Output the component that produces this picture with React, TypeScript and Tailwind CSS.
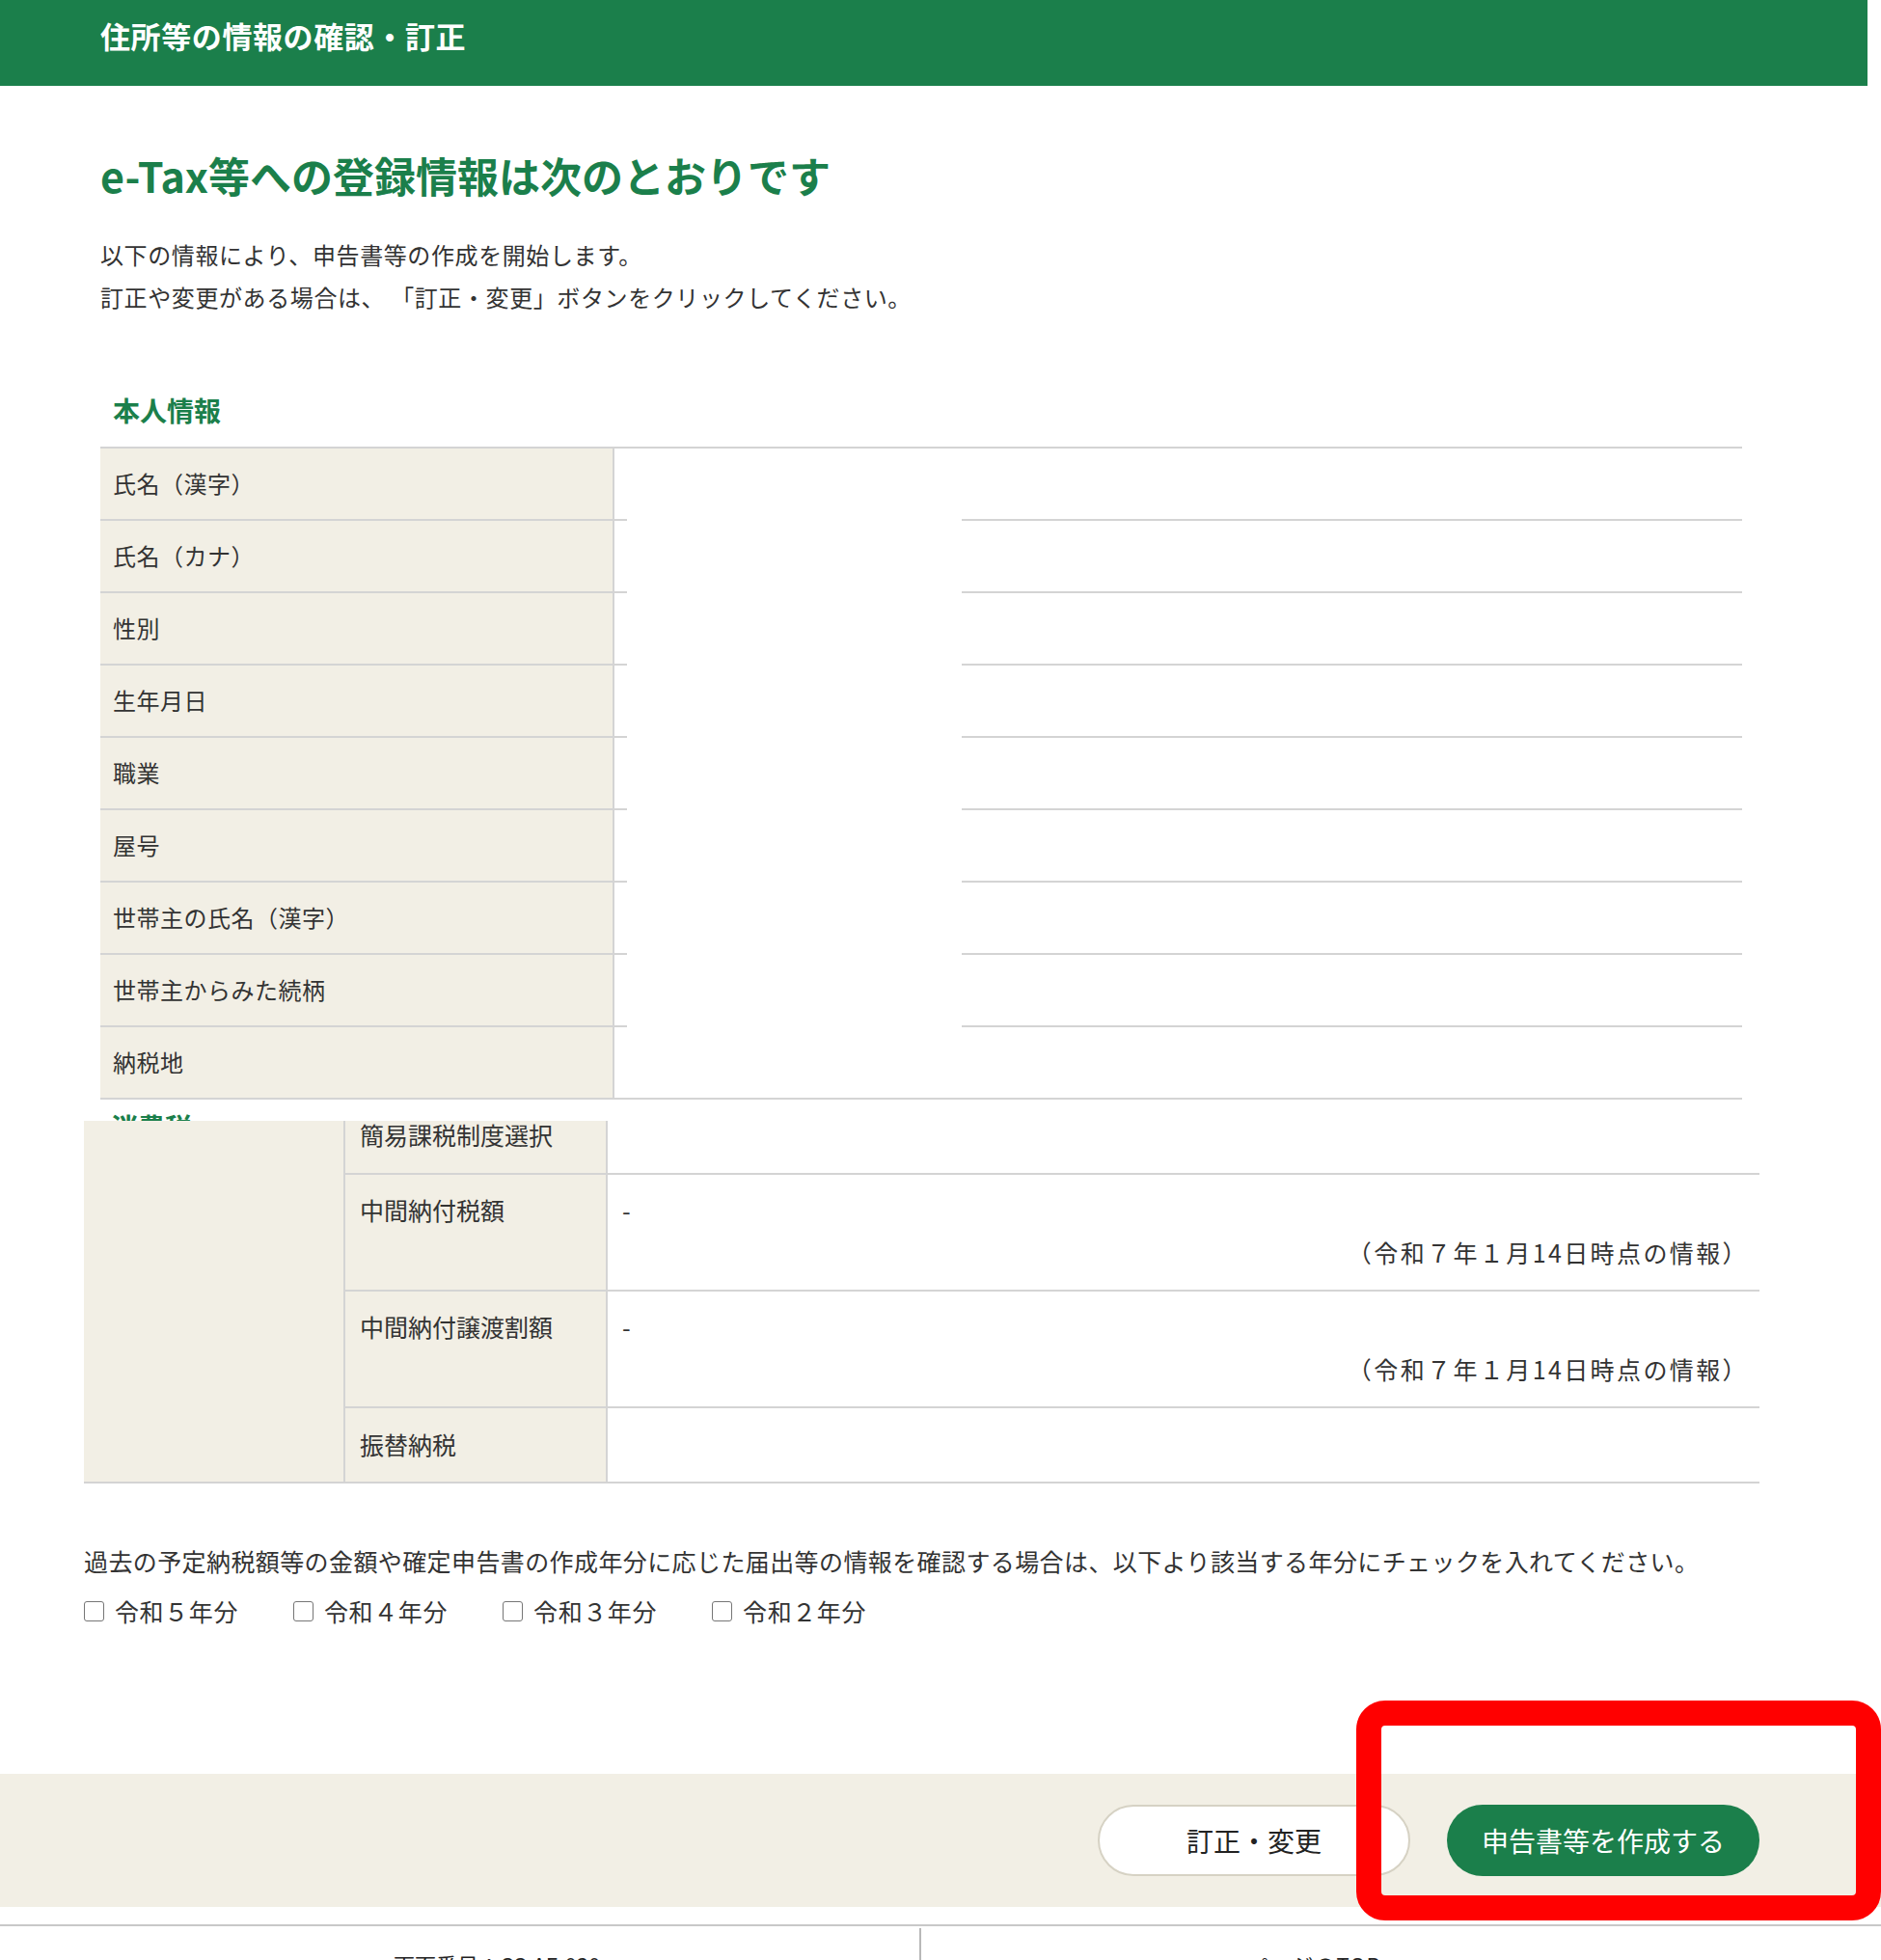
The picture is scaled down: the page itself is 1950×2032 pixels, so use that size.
import React from 'react';

const personalRows = [
  '氏名（漢字）',
  '氏名（カナ）',
  '性別',
  '生年月日',
  '職業',
  '屋号',
  '世帯主の氏名（漢字）',
  '世帯主からみた続柄',
  '納税地',
];

const years = ['令和５年分', '令和４年分', '令和３年分', '令和２年分'];

const App: React.FC = () => {
  return (
    <div className="relative w-[1950px] h-[2032px] overflow-hidden bg-white text-[#333] font-['Noto_Sans_CJK_JP','Noto_Sans',sans-serif]">
      {/* ヘッダー */}
      <header className="w-[1936px] h-[89px] bg-[#1b7f4b] flex items-center pl-[104px] pb-[16px]">
        <h1 className="text-white font-bold text-[31px] leading-none tracking-[0.6px]">住所等の情報の確認・訂正</h1>
      </header>

      <div className="pl-[104px]">
        <h2 className="mt-[64px] text-[43px] leading-[56px] font-semibold text-[#1b7f4b]">
          e-Tax等への登録情報は次のとおりです
        </h2>
        <p className="mt-[33px] text-[24px] leading-[44px] tracking-[0.6px]">
          以下の情報により、申告書等の作成を開始します。
          <br />
          訂正や変更がある場合は、 「訂正・変更」ボタンをクリックしてください。
        </p>

        <h3 className="mt-[75px] ml-[13px] text-[28px] leading-[40px] font-bold text-[#1b7f4b]">本人情報</h3>

        <div className="mt-[18px] w-[1702px] border-t-2 border-[#d4d4d4]">
          <div className="relative">
            {personalRows.map((label) => (
              <div key={label} className="flex h-[75px] border-b-2 border-[#d4d4d4]">
                <div className="w-[533px] bg-[#f2efe5] border-r-2 border-[#d4d4d4] pl-[13px] pb-[2px] flex items-center text-[24px] tracking-[0.5px]">
                  {label}
                </div>
                <div className="flex-1" />
              </div>
            ))}
            {/* 伏せ字部分 */}
            <div className="absolute left-[546px] top-0 bottom-[2px] w-[347px] bg-white" />
          </div>
        </div>
      </div>

      {/* 次のセクション見出し（切れている） */}
      <div className="h-[22px] overflow-hidden pl-[115px] pt-[8px]">
        <div className="text-[28px] leading-[40px] font-bold text-[#1b7f4b]">消費税</div>
      </div>

      {/* 消費税テーブル */}
      <div className="ml-[87px] w-[1737px] flex border-b-2 border-[#d4d4d4] text-[25px]">
        <div className="w-[271px] bg-[#f2efe5] border-r-2 border-[#d4d4d4]" />
        <div className="flex-1 flex flex-col">
          <div className="flex h-[56px] border-b-2 border-[#d4d4d4]">
            <div className="w-[272px] bg-[#f2efe5] border-r-2 border-[#d4d4d4] pl-[15px] leading-[28px]">
              簡易課税制度選択
            </div>
            <div className="flex-1" />
          </div>
          {['中間納付税額', '中間納付譲渡割額'].map((label) => (
            <div key={label} className="flex h-[121px] border-b-2 border-[#d4d4d4]">
              <div className="w-[272px] bg-[#f2efe5] border-r-2 border-[#d4d4d4] pl-[15px] pt-[14px] leading-[44px]">
                {label}
              </div>
              <div className="flex-1 pl-[15px] pr-[11px] pt-[14px] leading-[44px]">
                <div>-</div>
                <div className="text-right tracking-[2.4px]">（令和７年１月14日時点の情報）</div>
              </div>
            </div>
          ))}
          <div className="flex h-[76px]">
            <div className="w-[272px] bg-[#f2efe5] border-r-2 border-[#d4d4d4] pl-[15px] flex items-center">
              振替納税
            </div>
            <div className="flex-1" />
          </div>
        </div>
      </div>

      <p className="ml-[87px] mt-[60px] text-[25px] leading-[40px] tracking-[0.4px] whitespace-nowrap">
        過去の予定納税額等の金額や確定申告書の作成年分に応じた届出等の情報を確認する場合は、以下より該当する年分にチェックを入れてください。
      </p>
      <div className="ml-[87px] mt-[12px] h-[40px] flex items-center gap-[57px] text-[25px] tracking-[0.6px]">
        {years.map((y) => (
          <label key={y} className="flex items-center gap-[11px]">
            <span className="w-[21px] h-[21px] border-[1.5px] border-[#767676] rounded-[3px] bg-white" />
            <span className="leading-[40px]">{y}</span>
          </label>
        ))}
      </div>

      {/* ボタンエリア */}
      <div className="mt-[149px] h-[138px] bg-[#f2efe5] flex justify-end items-center gap-[38px] pr-[126px]">
        <button className="w-[324px] h-[74px] rounded-full bg-white border-2 border-[#d6d2c4] text-[28px] text-[#222]">
          訂正・変更
        </button>
        <button className="w-[324px] h-[74px] rounded-full bg-[#1b7f4b] text-[28px] text-white">
          申告書等を作成する
        </button>
      </div>

      {/* フッター */}
      <footer className="mt-[18px] border-t-2 border-[#c8c8c8] flex h-[60px] text-[22px] text-[#222] leading-[32px]">
        <div className="w-[955px] mt-[2px] border-r-2 border-[#b8b8b8] pl-[408px] pt-[21px]">画面番号：CC-AF-030</div>
        <div className="pl-[339px] pt-[23px] tracking-[1px]">ページのTOPへ</div>
      </footer>

      {/* 赤枠 */}
      <div className="absolute left-[1406px] top-[1763px] w-[544px] h-[228px] border-[26px] border-[#ff0000] rounded-[30px]" />
    </div>
  );
};

export default App;
